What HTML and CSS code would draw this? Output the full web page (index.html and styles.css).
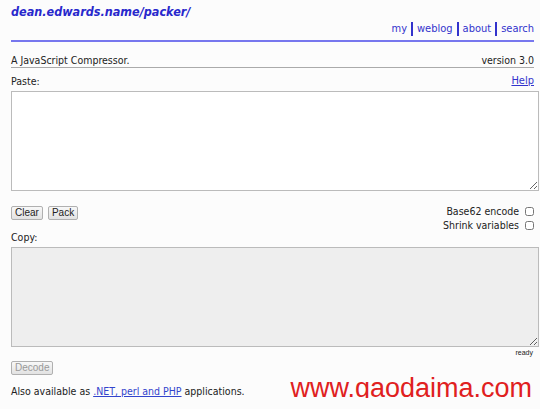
FILE: index.html
```html
<!DOCTYPE html>
<html lang="en">
<head>
  <meta charset="UTF-8" />
  <title>A JavaScript Compressor - dean.edwards.name/packer/</title>
  <link rel="stylesheet" href="styles.css">
</head>
<body>
  <div class="header">
    <h1><a href="#">dean.edwards.name/packer/</a></h1>
    <ul class="nav">
      <li><a href="#">my</a></li>
      <li><a href="#">weblog</a></li>
      <li><a href="#">about</a></li>
      <li><a href="#">search</a></li>
    </ul>
  </div>

  <div class="subhead">
    <span>A JavaScript Compressor.</span>
    <span>version 3.0</span>
  </div>

  <form id="form">
    <div class="label-row">
      <label for="input">Paste:</label>
      <a href="#" class="help">Help</a>
    </div>
    <textarea id="input" class="code"></textarea>

    <div class="controls">
      <div class="buttons">
        <button type="button">Clear</button>
        <button type="button">Pack</button>
      </div>
      <div class="options">
        <label>Base62 encode <input type="checkbox" /></label>
        <label>Shrink variables <input type="checkbox" /></label>
      </div>
    </div>

    <div class="label-row copy">
      <label for="output">Copy:</label>
    </div>
    <textarea id="output" class="code" readonly></textarea>
    <div class="status">ready</div>

    <button type="button" class="decode" disabled>Decode</button>
  </form>

  <div class="footer">
    <p>Also available as <a href="#">.NET, perl and PHP</a> applications.</p>
    <span class="watermark">www.gaodaima.com</span>
  </div>
</body>
</html>
```

FILE: styles.css
```css
body {
  font-family: Tahoma, "DejaVu Sans Condensed", "DejaVu Sans", sans-serif;
  font-size: 10.5px;
  color: #222;
  background-color: #fcfcfc;
  margin: 0;
  padding: 0 6px 0 11px;
}
a {
  color: #3333cc;
  text-decoration: none;
}
.header {
  border-bottom: 2px solid #7777ee;
  padding-top: 4px;
  padding-bottom: 4px;
}
.header h1 {
  margin: 0;
  font-size: 12.5px;
  font-style: italic;
  font-weight: bold;
  line-height: 16px;
}
.header h1 a {
  color: #2828cc;
}
.nav {
  list-style: none;
  margin: 2px 0 0;
  padding: 0;
  display: flex;
  justify-content: flex-end;
  font-size: 11px;
  line-height: 14px;
}
.nav li {
  padding: 0 4px;
  border-left: 2px solid #3333cc;
}
.nav li:first-child {
  border-left: none;
}
.nav li:last-child {
  padding-right: 0;
}
.subhead {
  display: flex;
  justify-content: space-between;
  border-bottom: 1px solid #aaa;
  margin-top: 11px;
  line-height: 14px;
}
.label-row {
  display: flex;
  justify-content: space-between;
  margin-top: 6px;
  line-height: 14px;
}
.help {
  text-decoration: underline;
  font-size: 11px;
}
.code {
  display: block;
  box-sizing: border-box;
  width: calc(100% + 5px);
  height: 100px;
  margin: 3px 0 0;
  border: 1px solid #bbb;
  background-color: #fff;
  resize: vertical;
}
#output {
  background-color: #eee;
  margin-top: 3px;
}
.controls {
  display: flex;
  justify-content: space-between;
  margin-top: 13px;
}
.buttons {
  display: flex;
  gap: 5px;
  padding-top: 2px;
}
button {
  font-family: Arial, "Liberation Sans", sans-serif;
  font-size: 10px;
  height: 14px;
  line-height: 12px;
  padding: 0 3px;
  color: #222;
  background: linear-gradient(#f8f8f8, #e2e2e2);
  border: 1px solid #b0b0b0;
  border-radius: 2px;
}
.options {
  display: flex;
  flex-direction: column;
  align-items: flex-end;
}
.options label {
  display: flex;
  align-items: center;
  gap: 4px;
  line-height: 14px;
}
.options input {
  margin: 0 0 0 2px;
  width: 9px;
  height: 9px;
}
.copy {
  margin-top: -2px;
}
.status {
  text-align: right;
  font-family: Arial, "Liberation Sans", sans-serif;
  font-size: 7px;
  padding-right: 1px;
  line-height: 12px;
}
.decode {
  color: #999;
  margin-top: 2px;
}
.footer {
  display: flex;
  justify-content: space-between;
  align-items: flex-end;
}
.footer p {
  margin: 8px 0 0;
  line-height: 14px;
}
.footer p a {
  color: #3344cc;
  text-decoration: underline;
}
.watermark {
  font-family: Arial, "Liberation Sans", sans-serif;
  font-size: 27px;
  color: #e02020;
  line-height: 26px;
  margin-right: 2px;
  margin-bottom: -3px;
}
```
